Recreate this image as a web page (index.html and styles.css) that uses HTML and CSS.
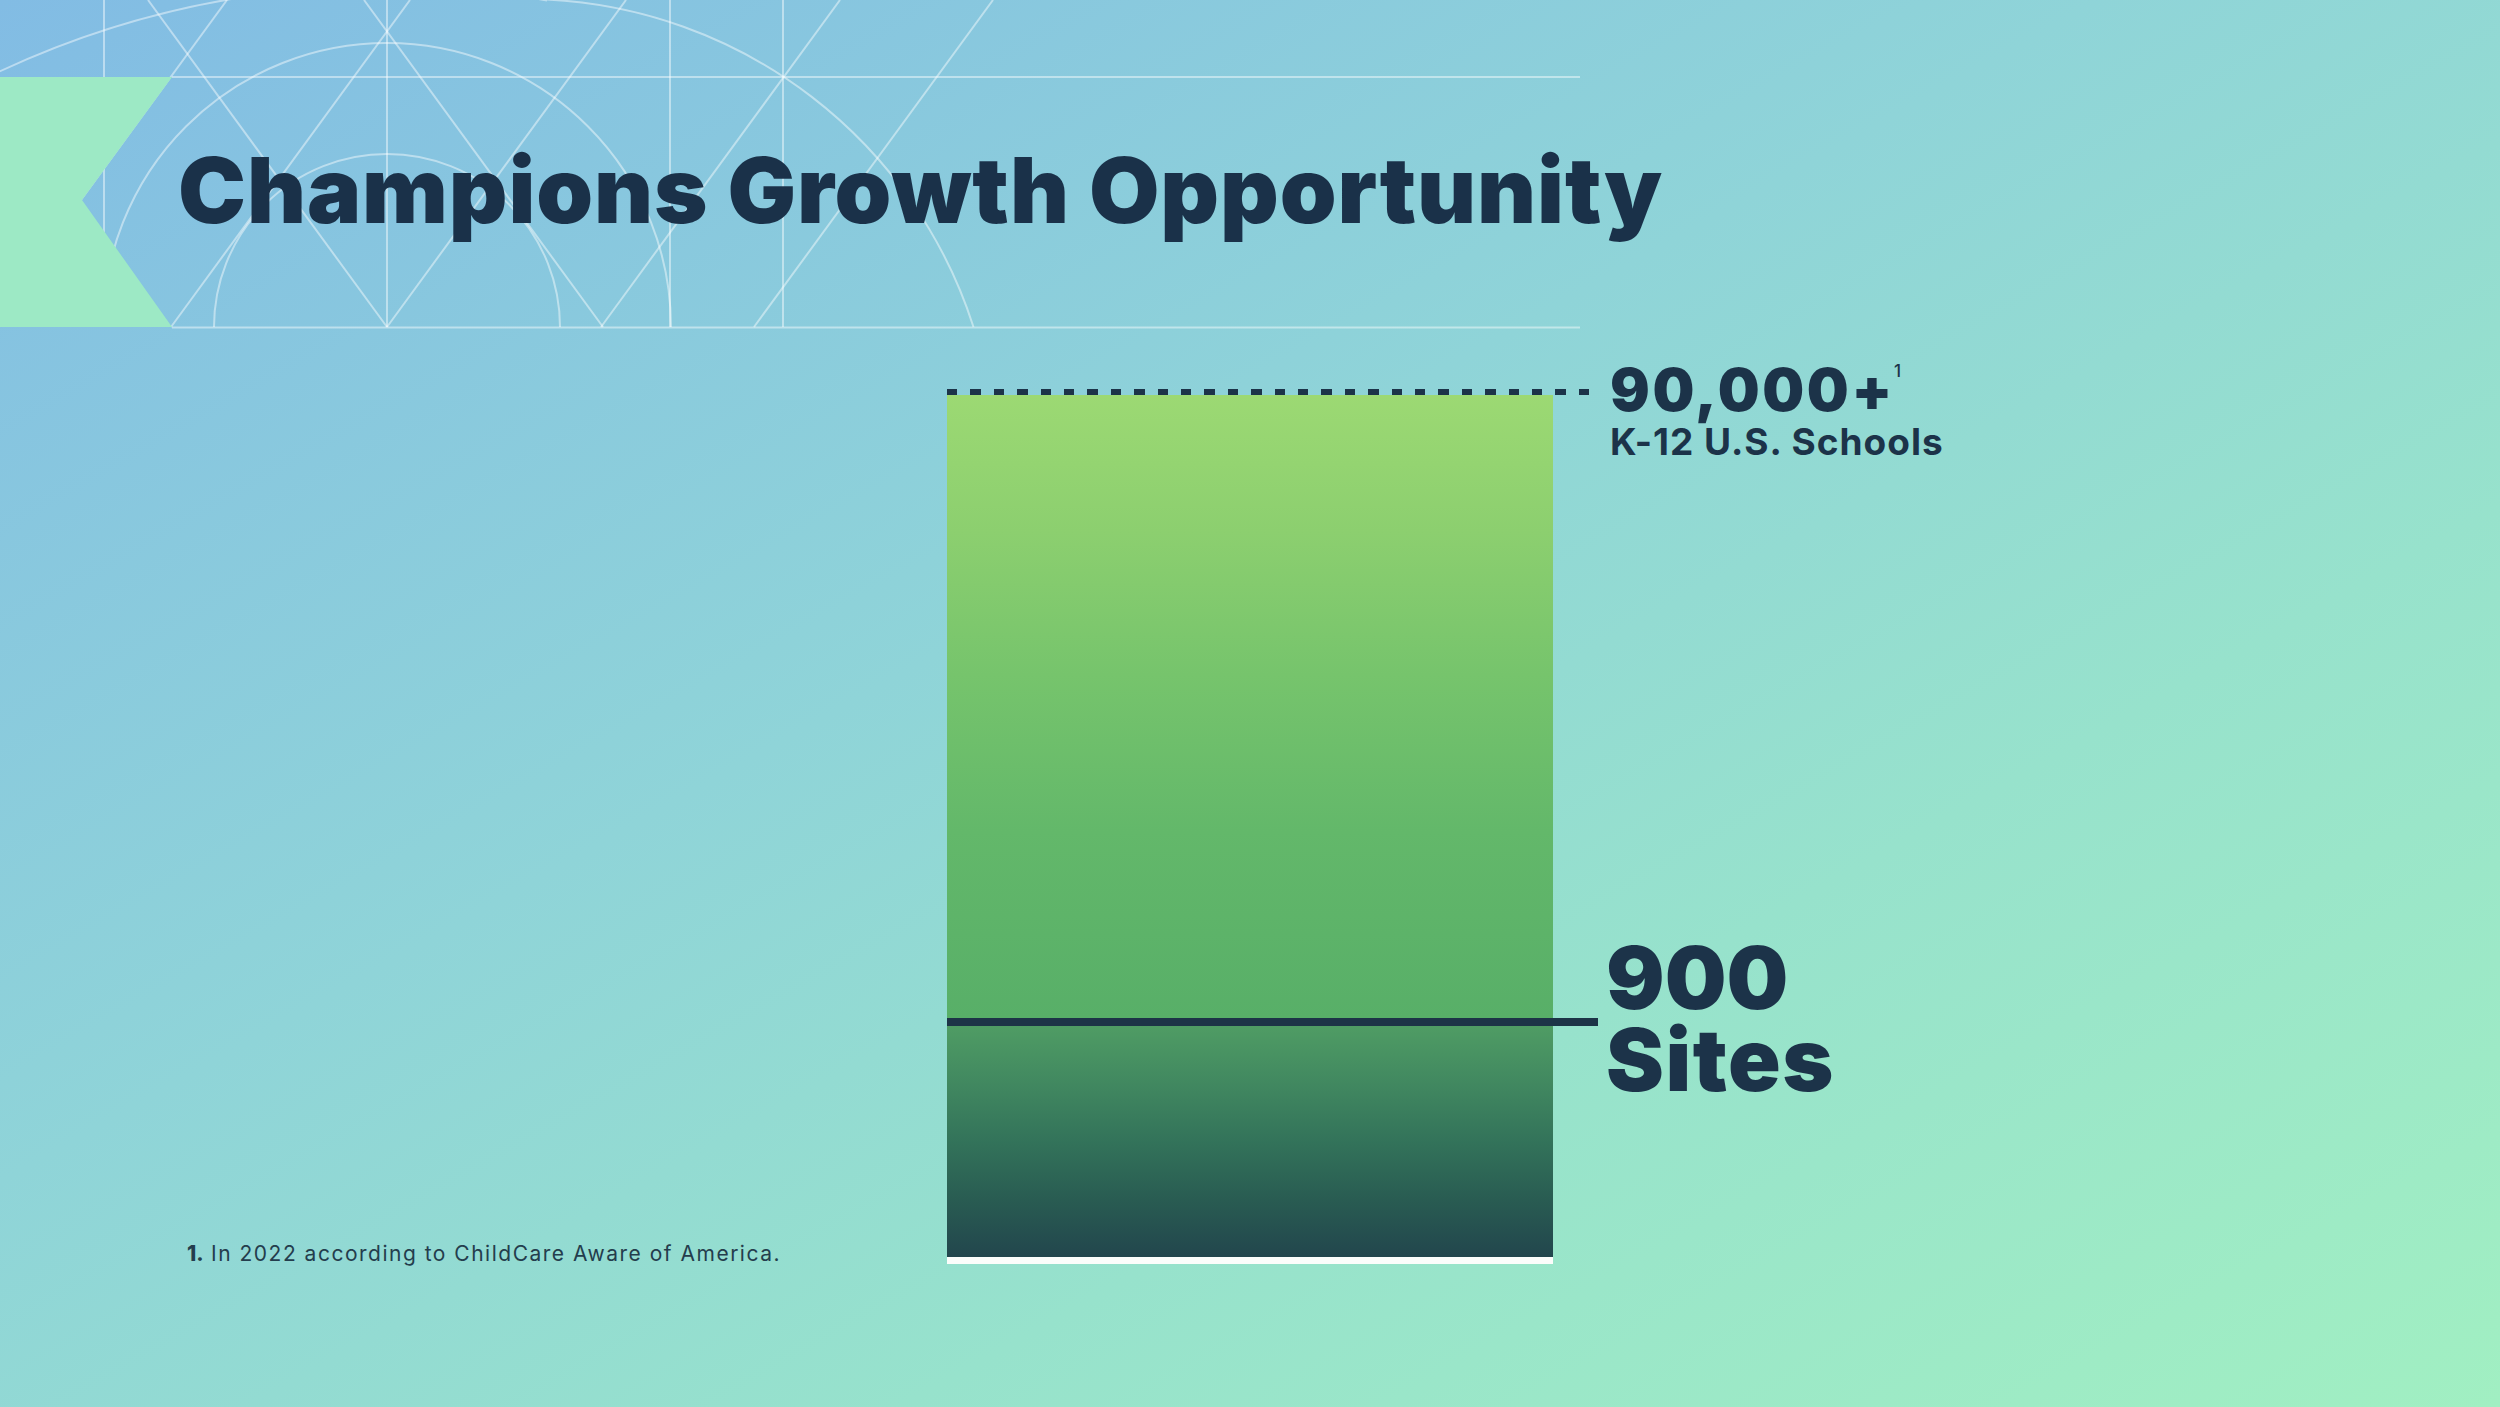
FILE: index.html
```html
<!DOCTYPE html>
<html lang="en">
<head>
<meta charset="utf-8">
<title>Champions Growth Opportunity</title>
<link rel="stylesheet" href="styles.css">
</head>
<body>
<div class="slide">
  <header class="header">
    <svg class="header-art" width="1600" height="330" viewBox="0 0 1600 330" aria-hidden="true">
      <defs>
        <linearGradient id="fade" x1="0" y1="0" x2="1600" y2="0" gradientUnits="userSpaceOnUse">
          <stop offset="0" stop-color="#ffffff" stop-opacity="0.55"/>
          <stop offset="0.6" stop-color="#ffffff" stop-opacity="0.4"/>
          <stop offset="1" stop-color="#ffffff" stop-opacity="0.05"/>
        </linearGradient>
      </defs>
      <g class="grid-lines">
        <line x1="172" y1="77" x2="1580" y2="77" stroke="url(#fade)"/>
        <line x1="172" y1="327.5" x2="1580" y2="327.5" stroke="url(#fade)"/>
        <line x1="104" y1="0" x2="104" y2="327"/>
        <line x1="387" y1="0" x2="387" y2="327"/>
        <line x1="670" y1="0" x2="670" y2="327"/>
        <line x1="783" y1="0" x2="783" y2="327"/>
        <line x1="148" y1="0" x2="387" y2="327"/>
        <line x1="364" y1="0" x2="603" y2="327"/>
        <line x1="227" y1="0" x2="-12" y2="327"/>
        <line x1="410" y1="0" x2="171" y2="327"/>
        <line x1="626" y1="0" x2="387" y2="327"/>
        <line x1="840" y1="0" x2="601" y2="327"/>
        <line x1="993" y1="0" x2="754" y2="327"/>
        <path d="M 214 327 A 173 173 0 0 1 560 327"/>
        <path d="M 103 327 A 284 284 0 0 1 671 327"/>
        <path d="M -10 76 A 911 911 0 0 1 547 0.5"/>
        <path d="M 547 -0.4 A 472 472 0 0 1 973.5 327"/>
      </g>
      <polygon class="ribbon" points="0,77 172,77 82,200 172,327 0,327"/>
    </svg>
    <h1 class="title">Champions Growth Opportunity</h1>
  </header>

  <main class="main">
    <div class="notes">
      <p class="footnote"><b>1.</b> In 2022 according to ChildCare Aware of America.</p>
    </div>

    <div class="chart">
      <div class="bar-col">
        <div class="dash-line"></div>
        <div class="bar-top"></div>
        <div class="sites-line"></div>
        <div class="bar-bottom"></div>
        <div class="bar-base"></div>
      </div>
      <div class="labels">
        <div class="stat-top">
          <div class="stat-big">90,000+<sup class="ref">1</sup></div>
          <div class="stat-sub">K-12 U.S. Schools</div>
        </div>
        <div class="stat-sites">
          <div class="sites-line-text">900</div>
          <div class="sites-line-text sites-word">Sites</div>
        </div>
      </div>
    </div>
  </main>
</div>
</body>
</html>
```

FILE: styles.css
```css
* {
  box-sizing: border-box;
}

html, body {
  margin: 0;
  padding: 0;
}

body {
  width: 2500px;
  height: 1407px;
  overflow: hidden;
  font-family: Inter, "Noto Sans", "Liberation Sans", sans-serif;
  color: #1c3349;
}

.slide {
  width: 2500px;
  height: 1407px;
  display: flex;
  flex-direction: column;
  background: linear-gradient(to bottom right, #82bce4 0%, #8fd4d8 42%, #97e2cc 68%, #a1efc2 100%);
}

/* ---------- header ---------- */
.header {
  position: relative;
  height: 327px;
  flex: 0 0 327px;
}

.header-art {
  position: absolute;
  left: 0;
  top: 0;
  overflow: hidden;
}

.grid-lines line,
.grid-lines path {
  fill: none;
  stroke: rgba(255, 255, 255, 0.45);
  stroke-width: 2;
}

.ribbon {
  fill: #9de9c5;
}

.title {
  position: relative;
  margin: 0;
  padding: 145px 0 0 178px;
  font-size: 91px;
  line-height: 91px;
  font-weight: 900;
  letter-spacing: 0.9px;
  color: #1a3149;
}

/* ---------- main ---------- */
.main {
  flex: 1;
  display: flex;
}

.notes {
  width: 947px;
  flex: 0 0 947px;
  padding: 916px 0 0 187px;
}

.footnote {
  margin: 0;
  font-size: 21px;
  line-height: 21px;
  font-weight: 400;
  letter-spacing: 1.5px;
  color: #243d4d;
  white-space: nowrap;
}

.footnote b {
  font-weight: 800;
  letter-spacing: 0;
}

.chart {
  display: flex;
}

.bar-col {
  width: 606px;
  padding-top: 62px;
  display: flex;
  flex-direction: column;
}

.dash-line {
  width: 642px;
  height: 6px;
  background: repeating-linear-gradient(to right, #1c3349 0 10.5px, transparent 10.5px 23.4px);
}

.bar-top {
  width: 606px;
  height: 623px;
  background: linear-gradient(to bottom, #9cd973 0%, #8ccf6f 22%, #76c46c 45%, #63b86a 70%, #58af68 100%);
}

.sites-line {
  width: 651px;
  height: 8px;
  background: #1d3447;
}

.bar-bottom {
  width: 606px;
  height: 231px;
  background: linear-gradient(to bottom, #4f9c64 0%, #418860 25%, #33735a 50%, #295c52 75%, #22464d 100%);
}

.bar-base {
  width: 606px;
  height: 7px;
  background: #fbfdfb;
}

.labels {
  margin-left: 57px;
  display: flex;
  flex-direction: column;
}

.stat-top {
  padding-top: 33px;
}

.stat-big {
  font-size: 59px;
  line-height: 59px;
  font-weight: 900;
  letter-spacing: 2.6px;
  white-space: nowrap;
}

.ref {
  font-size: 17px;
  line-height: 0;
  font-weight: 500;
  letter-spacing: 0;
  vertical-align: baseline;
  position: relative;
  top: -34px;
  margin-left: -1px;
}

.stat-sub {
  margin-top: 4px;
  font-size: 37px;
  line-height: 37px;
  font-weight: 700;
  letter-spacing: 1px;
  white-space: nowrap;
}

.stat-sites {
  margin-top: 477px;
  margin-left: -4px;
  font-size: 87px;
  font-weight: 900;
  letter-spacing: 0;
}

.sites-line-text {
  height: 82px;
  line-height: 82px;
  white-space: nowrap;
}

.sites-word {
  letter-spacing: 1.5px;
}
```
